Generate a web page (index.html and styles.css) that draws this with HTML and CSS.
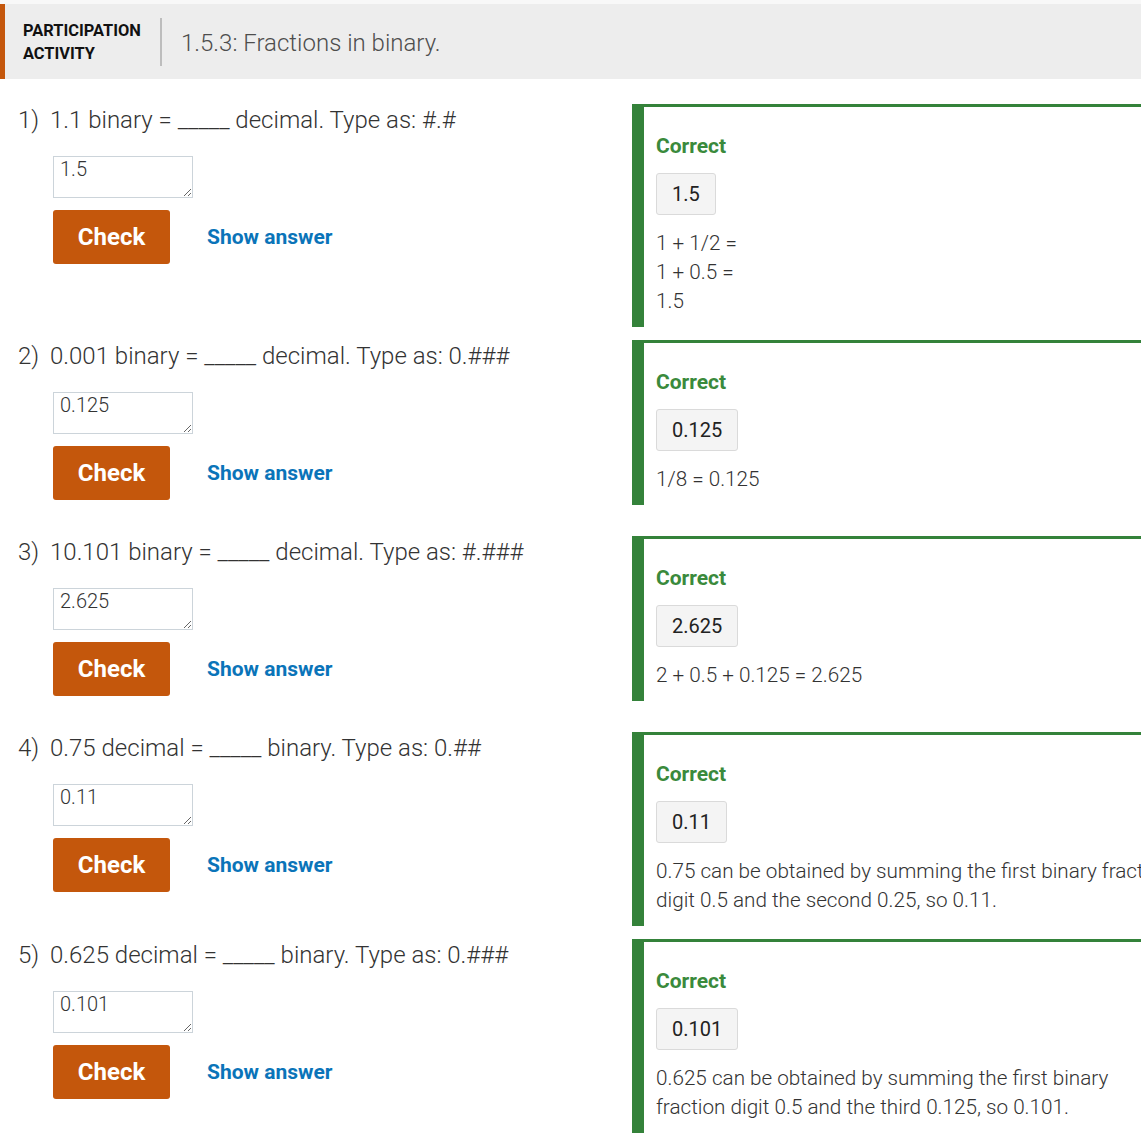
FILE: index.html
```html
<!DOCTYPE html>
<html lang="en">
<head>
<meta charset="utf-8">
<title>1.5.3: Fractions in binary.</title>
<link rel="stylesheet" href="styles.css">
</head>
<body>
<div class="page">
  <header class="activity-header">
    <div class="activity-label">PARTICIPATION<br>ACTIVITY</div>
    <div class="divider"></div>
    <h1 class="activity-title">1.5.3: Fractions in binary.</h1>
  </header>

  <div class="questions">
    <div class="row">
      <div class="question">
        <div class="prompt"><span class="num">1)</span><span class="text">1.1 binary = _____ decimal. Type as: #.#</span></div>
        <textarea class="answer-input" readonly>1.5</textarea>
        <div class="actions"><button class="check">Check</button><a class="show">Show answer</a></div>
      </div>
      <div class="feedback">
        <div class="correct">Correct</div>
        <div class="answer-box">1.5</div>
        <div class="explain">1 + 1/2 =<br>1 + 0.5 =<br>1.5</div>
      </div>
    </div>

    <div class="row">
      <div class="question">
        <div class="prompt"><span class="num">2)</span><span class="text">0.001 binary = _____ decimal. Type as: 0.###</span></div>
        <textarea class="answer-input" readonly>0.125</textarea>
        <div class="actions"><button class="check">Check</button><a class="show">Show answer</a></div>
      </div>
      <div class="feedback">
        <div class="correct">Correct</div>
        <div class="answer-box">0.125</div>
        <div class="explain">1/8 = 0.125</div>
      </div>
    </div>

    <div class="row">
      <div class="question">
        <div class="prompt"><span class="num">3)</span><span class="text">10.101 binary = _____ decimal. Type as: #.###</span></div>
        <textarea class="answer-input" readonly>2.625</textarea>
        <div class="actions"><button class="check">Check</button><a class="show">Show answer</a></div>
      </div>
      <div class="feedback">
        <div class="correct">Correct</div>
        <div class="answer-box">2.625</div>
        <div class="explain">2 + 0.5 + 0.125 = 2.625</div>
      </div>
    </div>

    <div class="row">
      <div class="question">
        <div class="prompt"><span class="num">4)</span><span class="text">0.75 decimal = _____ binary. Type as: 0.##</span></div>
        <textarea class="answer-input" readonly>0.11</textarea>
        <div class="actions"><button class="check">Check</button><a class="show">Show answer</a></div>
      </div>
      <div class="feedback">
        <div class="correct">Correct</div>
        <div class="answer-box">0.11</div>
        <div class="explain">0.75 can be obtained by summing the first binary fraction digit 0.5 and the second 0.25, so 0.11.</div>
      </div>
    </div>

    <div class="row">
      <div class="question">
        <div class="prompt"><span class="num">5)</span><span class="text">0.625 decimal = _____ binary. Type as: 0.###</span></div>
        <textarea class="answer-input" readonly>0.101</textarea>
        <div class="actions"><button class="check">Check</button><a class="show">Show answer</a></div>
      </div>
      <div class="feedback">
        <div class="correct">Correct</div>
        <div class="answer-box">0.101</div>
        <div class="explain">0.625 can be obtained by summing the first binary fraction digit 0.5 and the third 0.125, so 0.101.</div>
      </div>
    </div>
  </div>
</div>
</body>
</html>
```

FILE: styles.css
```css
html, body {
  margin: 0;
  padding: 0;
  overflow: hidden;
  background: #ffffff;
}

body {
  font-family: Roboto, "Liberation Sans", sans-serif;
  color: #333333;
}

.page {
  width: 1210px;
  padding-top: 4px;
  background: linear-gradient(#f8f8f8 0, #f8f8f8 4px, #ffffff 4px);
}

.activity-header {
  display: flex;
  align-items: center;
  height: 75px;
  background: #ededed;
  border-left: 5px solid #c4570c;
  box-sizing: border-box;
}

.activity-label {
  padding-left: 18px;
  font-size: 16.4px;
  font-weight: 700;
  line-height: 23px;
  color: #111111;
  width: 137px;
  box-sizing: content-box;
}

.divider {
  width: 2px;
  height: 48px;
  background: #bdbdbd;
}

.activity-title {
  margin: 2px 0 0 19px;
  font-size: 24px;
  font-weight: 300;
  color: #4d4d4d;
}

.questions {
  padding-top: 25px;
}

.row {
  display: flex;
  align-items: flex-start;
}

.question {
  width: 632px;
  flex: none;
  box-sizing: border-box;
  padding: 0 0 36px 18px;
}

.prompt {
  display: flex;
  font-size: 24px;
  font-weight: 300;
  line-height: 32px;
  color: #333333;
}

.num {
  width: 32px;
  flex: none;
}

.answer-input {
  display: block;
  margin: 20px 0 0 35px;
  width: 140px;
  height: 42px;
  box-sizing: border-box;
  border: 1px solid #ccd4da;
  border-radius: 0;
  padding: 0 6px;
  font-family: Roboto, "Liberation Sans", sans-serif;
  font-size: 20px;
  font-weight: 300;
  line-height: 24px;
  color: #333333;
  background: #ffffff;
  outline: none;
}

.actions {
  display: flex;
  align-items: center;
  margin: 12px 0 0 35px;
}

.check {
  width: 117px;
  height: 54px;
  border: none;
  border-radius: 3px;
  background: #c4570c;
  color: #ffffff;
  font-family: Roboto, "Liberation Sans", sans-serif;
  font-size: 24px;
  font-weight: 700;
  padding: 0;
}

.show {
  margin-left: 37px;
  font-size: 21px;
  font-weight: 700;
  color: #0a74b9;
}

.feedback {
  flex: 1;
  margin-bottom: 13px;
  border-left: 12px solid #34823a;
  border-top: 3px solid #34823a;
  padding: 26px 30px 11.5px 12px;
}

.correct {
  font-size: 21px;
  font-weight: 700;
  line-height: 26px;
  color: #3a8a3c;
}

.answer-box {
  display: inline-block;
  margin-top: 14px;
  height: 42px;
  box-sizing: border-box;
  padding: 0 15px;
  border: 1px solid #dadada;
  border-radius: 3px;
  background: #f4f4f4;
  font-size: 20px;
  font-weight: 400;
  line-height: 40px;
  color: #222222;
}

.explain {
  margin-top: 13.5px;
  font-size: 20.7px;
  font-weight: 300;
  line-height: 29px;
  color: #333333;
}
```
